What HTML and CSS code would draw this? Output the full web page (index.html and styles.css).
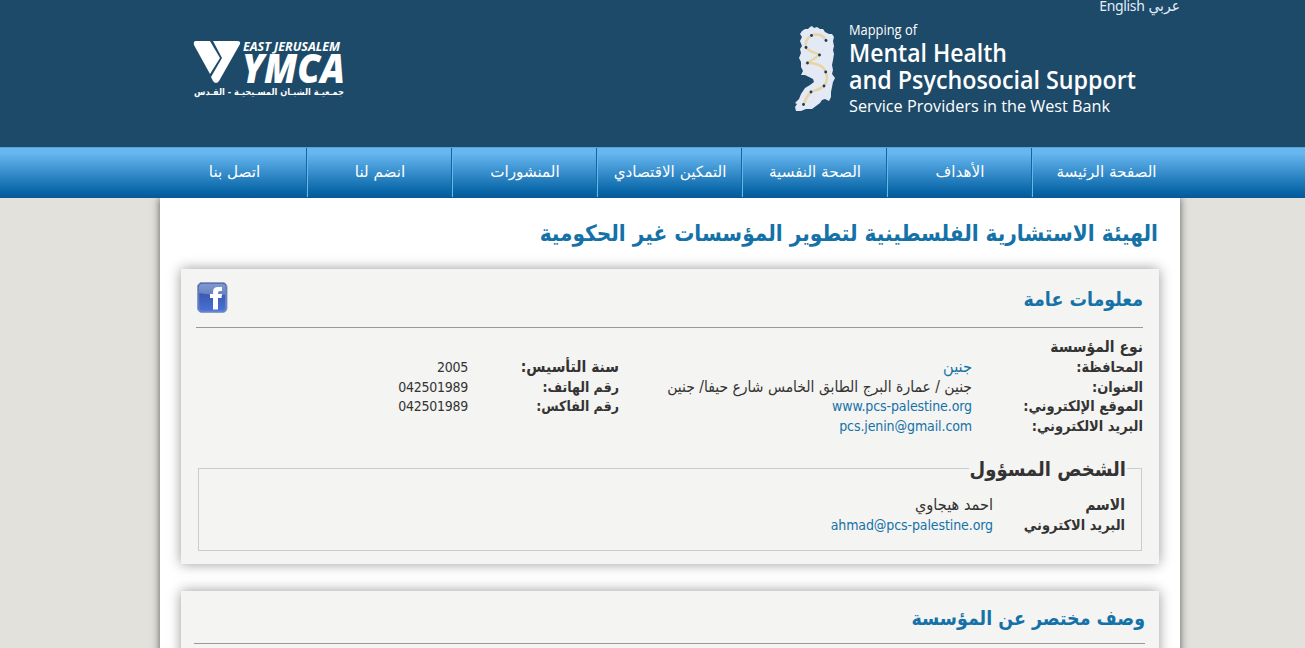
FILE: index.html
```html
<!DOCTYPE html>
<html lang="ar" dir="rtl">
<head>
<meta charset="utf-8">
<title>الهيئة الاستشارية الفلسطينية لتطوير المؤسسات غير الحكومية</title>
<link rel="stylesheet" href="styles.css">
</head>
<body>
<header class="header">
  <div class="header-inner">
    <div class="site-brand">
      <div class="languages"><a class="lang-ar">عربي</a> <a class="lang-en">English</a></div>
      <svg class="site-logo" viewBox="0 0 350 100" width="350" height="100" direction="ltr">
        <path d="M8 14L11 12L14 12L16 10L18 9L20 11L23 10L26 12L29 12L31 15L35 17L38 17L40 20L39 24L40 29L39 33L40 37L39 43L38 48L39 53L38 57L41 61L39 65L38 70L37 75L37 80L35 84L31 82L28 83L26 86L22 89L18 92L12 92L7 94L2 94L1 90L3 87L1 86L5 82L7 77L11 71L16 68L20 65L19 62L15 60L11 58L7 58L9 54L7 50L7 45L5 41L7 36L6 32L8 29L6 24L8 20L6 17Z" fill="#e4e9f6"/>
        <path d="M32 23.500C30 18 23 16 17.500 18.500C13 21 11 25 12 30.500C15 35 21 35 25.500 38L13.500 46C22 46 29 48 31.700 55C34 60 33 65 30 69C26 73 21 73 17 75Q12 80 9.500 87.500" fill="none" stroke="#e8d5a2" stroke-width="2.5"/>
        <g fill="#17375b"><circle cx="32" cy="23.500" r="1.4"/><circle cx="17.500" cy="18.500" r="1.4"/><circle cx="12" cy="30.500" r="1.4"/><circle cx="25.500" cy="38" r="1.4"/><circle cx="13.500" cy="46" r="1.4"/><circle cx="31.700" cy="55" r="1.4"/><circle cx="30" cy="69" r="1.4"/><circle cx="17" cy="75" r="1.4"/><circle cx="9.500" cy="87.500" r="1.4"/></g>
        <g class="logo-text">
          <text x="55" y="18" font-size="14" textLength="68" lengthAdjust="spacingAndGlyphs">Mapping of</text>
          <text class="strong" x="55" y="45" font-size="26" textLength="158" lengthAdjust="spacingAndGlyphs">Mental Health</text>
          <text class="strong" x="55" y="72" font-size="26" textLength="287" lengthAdjust="spacingAndGlyphs">and Psychosocial Support</text>
          <text x="55" y="95" font-size="17" textLength="261" lengthAdjust="spacingAndGlyphs">Service Providers in the West Bank</text>
        </g>
      </svg>
    </div>
    <svg class="ymca-logo" viewBox="0 0 152 62" width="152" height="62" direction="ltr">
      <path d="M3 1H17L27 18L17 34L1 5Q0 1 3 1Z" fill="#fff"/>
      <path d="M20 1H44Q48 1 47 4L26 41Q23 45 20 41L18 37L29 18Z" fill="#fff"/>
      <g class="logo-text" font-style="italic">
        <text class="bold" x="50" y="11" font-size="12" textLength="97" lengthAdjust="spacingAndGlyphs">EAST JERUSALEM</text>
        <text class="heavy" x="49" y="43" font-size="40" textLength="103" lengthAdjust="spacingAndGlyphs">YMCA</text>
      </g>
      <text class="logo-arabic" x="1" y="55" textLength="150" lengthAdjust="spacingAndGlyphs">جمـعيـة الشبـان المسـيحيـة - القـدس</text>
    </svg>
  </div>
</header>
<nav class="nav">
  <div class="nav-inner">
    <a class="nav-item">الصفحة الرئيسة</a>
    <a class="nav-item">الأهداف</a>
    <a class="nav-item">الصحة النفسية</a>
    <a class="nav-item">التمكين الاقتصادي</a>
    <a class="nav-item">المنشورات</a>
    <a class="nav-item">انضم لنا</a>
    <a class="nav-item">اتصل بنا</a>
  </div>
</nav>
<main class="page">
  <h1 class="title">الهيئة الاستشارية الفلسطينية لتطوير المؤسسات غير الحكومية</h1>
  <section class="card card-info">
    <div class="card-head">
      <h2 class="card-title">معلومات عامة</h2>
      <svg class="facebook" viewBox="0 0 31 31" width="31" height="31">
        <defs>
          <linearGradient id="fb" x1="0" y1="0" x2="0" y2="1"><stop offset="0" stop-color="#2f4c96"/><stop offset="1" stop-color="#4a72d8"/></linearGradient>
          <linearGradient id="gloss" x1="0" y1="0" x2="0" y2="1"><stop offset="0" stop-color="#8299d0"/><stop offset="1" stop-color="#6580c0"/></linearGradient>
        </defs>
        <rect x=".5" y=".5" width="29.500" height="30" rx="4.500" fill="url(#fb)" stroke="#8f9dbd"/>
        <path d="M2 11V5Q2 2 5 2H25.500Q28.500 2 28.500 5V13Q13 13 2 11Z" fill="url(#gloss)"/>
        <rect x="1.800" y="1.800" width="26.900" height="27.400" rx="3.500" fill="none" stroke="#7791d2" stroke-width=".8"/>
        <path d="M16 27.500V16H13V12H16V10Q16 5 21 5H25V9H23Q21 9 21 11V12H25L24.500 16H21V27.500Z" fill="#fff"/>
      </svg>
    </div>
    <div class="details">
      <b class="wide">نوع المؤسسة</b><span></span><b></b><span></span>
      <b>المحافظة:</b><span><a class="link arabic">جنين</a></span><b class="wide">سنة التأسيس:</b><span>2005</span>
      <b>العنوان:</b><span class="address">جنين / عمارة البرج الطابق الخامس شارع حيفا/ جنين</span><b class="narrow">رقم الهاتف:</b><span>042501989</span>
      <b>الموقع الإلكتروني:</b><span><a class="link latin">www.pcs-palestine.org</a></span><b class="narrow">رقم الفاكس:</b><span>042501989</span>
      <b>البريد الالكتروني:</b><span><a class="link latin">pcs.jenin@gmail.com</a></span><b></b><span></span>
    </div>
    <fieldset class="contact">
      <legend class="contact-title">الشخص المسؤول</legend>
      <div class="contact-grid">
        <b class="wide">الاسم</b><span class="arabic">احمد هيجاوي</span>
        <b>البريد الاكتروني</b><span><a class="link latin">ahmad@pcs-palestine.org</a></span>
      </div>
    </fieldset>
  </section>
  <section class="card card-about">
    <div class="card-head">
      <h2 class="card-title">وصف مختصر عن المؤسسة</h2>
    </div>
  </section>
</main>
</body>
</html>
```

FILE: styles.css
```css
* { box-sizing: border-box; }
body {
  margin: 0;
  height: 648px;
  overflow: hidden;
  background: #e2e1dc;
  color: #333;
  font: 14px/20px "DejaVu Sans Condensed", "DejaVu Sans", sans-serif;
}
svg { overflow: visible; }
.header { height: 147px; background: #1e4a69; }
.header-inner {
  width: 1020px;
  margin-right: 125px;
  display: flex;
  justify-content: space-between;
}
.site-brand { width: 386px; }
.languages { height: 17px; line-height: 12px; color: #e0eef8; }
.lang-ar { font-size: 15.5px; }
.lang-en { font-family: "Noto Sans", sans-serif; font-size: 14px; letter-spacing: -0.35px; }
.site-logo { display: block; margin-right: 36px; }
.logo-text { font-family: "Open Sans", sans-serif; fill: #fff; }
.strong { font-weight: 650; }
.bold { font-weight: 700; }
.heavy { font-weight: 800; }
.ymca-logo { display: block; margin-top: 40px; margin-left: 33px; }
.logo-arabic { font-family: "DejaVu Sans Condensed", sans-serif; font-weight: 700; font-size: 9px; fill: #fff; }
.nav {
  position: relative;
  height: 51px;
  background: linear-gradient(#67b8ef 0, #67b7f0 10%, #0c69aa 84%, #06589a 100%);
  border-top: 1px solid #5ca3d4;
}
.nav-inner { width: 1020px; margin-right: 125px; display: flex; }
.nav-item {
  width: 145px;
  height: 49px;
  line-height: 49px;
  text-align: center;
  color: #fff;
  font-family: "DejaVu Sans", sans-serif;
  font-size: 15.2px;
  white-space: nowrap;
  border-left: 1px solid #69b7ea;
  box-shadow: -1px 0 #0c69a4;
}
.nav-item:first-child { width: 148px; }
.nav-item:last-child { border: 0; box-shadow: none; }
.page {
  width: 1020px;
  height: 480px;
  margin-right: 125px;
  padding: 21px 21px 0;
  background: #fff;
  box-shadow: 0 0 8px #555;
}
.title {
  margin: 0 1px 22px 0;
  font-size: 22.35px;
  line-height: 28px;
  color: #1572a8;
  white-space: nowrap;
}
.card {
  width: 978px;
  background: #f4f4f2;
  box-shadow: 0 0 12px #999;
}
.card-info { height: 295px; margin-bottom: 27px; padding: 14px 16px 0 15px; }
.card-about { height: 80px; padding: 14px 14px 0 13px; }
.card-head {
  display: flex;
  justify-content: space-between;
  height: 45px;
  border-bottom: 1px solid #999;
}
.card-about .card-head { height: 39px; }
.card-title { margin: 3px 0 0; font-size: 19.4px; line-height: 28px; color: #1572a8; }
.card-about .card-title { margin-top: 0; }
.facebook { margin: -1px 0 0 1px; }
.details {
  display: grid;
  grid-template-columns: 171px 353px 151px 200px;
  grid-auto-rows: 19.8px;
  margin-top: 9px;
  white-space: nowrap;
}
.details b, .contact-grid b { font-size: 14.5px; }
.details .wide, .contact-grid .wide { font-size: 15.5px; }
.details .narrow { font-size: 14px; }
.details span, .contact-grid span { letter-spacing: -0.25px; }
.details .address { font-size: 15.5px; letter-spacing: 0; }
.details .latin, .contact-grid .latin { letter-spacing: -0.1px; }
.contact-grid .arabic, .details .arabic { font-size: 16.2px; letter-spacing: 0; }
.link { color: #1572a8; }
.contact {
  margin: 21px 1px 0 2px;
  padding: 0 16px;
  height: 94px;
  border: 1px solid #ccc;
}
.contact-title { margin-right: -2px; padding: 0 1px; font-size: 20px; font-weight: 700; line-height: 24px; }
.contact-grid {
  display: grid;
  grid-template-columns: 132px 1fr;
  grid-auto-rows: 20px;
  margin-top: 14px;
  white-space: nowrap;
}
```
